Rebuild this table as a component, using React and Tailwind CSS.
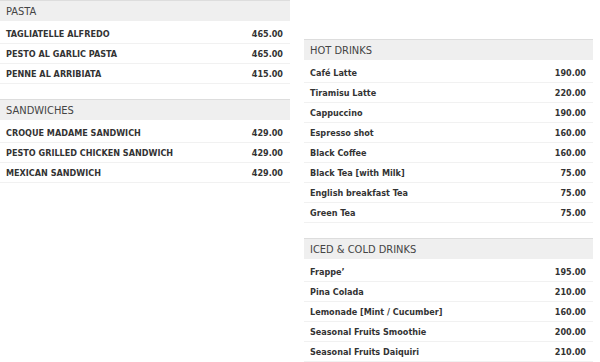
import React from 'react'

const font = { fontFamily: '"DejaVu Sans Condensed", "DejaVu Sans", "Liberation Sans", sans-serif' }

const leftMenu = [
  {
    title: 'PASTA',
    items: [
      ['TAGLIATELLE ALFREDO', '465.00'],
      ['PESTO AL GARLIC PASTA', '465.00'],
      ['PENNE AL ARRIBIATA', '415.00']
    ]
  },
  {
    title: 'SANDWICHES',
    items: [
      ['CROQUE MADAME SANDWICH', '429.00'],
      ['PESTO GRILLED CHICKEN SANDWICH', '429.00'],
      ['MEXICAN SANDWICH', '429.00']
    ]
  }
]

const rightMenu = [
  {
    title: 'HOT DRINKS',
    items: [
      ['Café Latte', '190.00'],
      ['Tiramisu Latte', '220.00'],
      ['Cappuccino', '190.00'],
      ['Espresso shot', '160.00'],
      ['Black Coffee', '160.00'],
      ['Black Tea [with Milk]', '75.00'],
      ['English breakfast Tea', '75.00'],
      ['Green Tea', '75.00']
    ]
  },
  {
    title: 'ICED & COLD DRINKS',
    items: [
      ['Frappe’', '195.00'],
      ['Pina Colada', '210.00'],
      ['Lemonade [Mint / Cucumber]', '160.00'],
      ['Seasonal Fruits Smoothie', '200.00'],
      ['Seasonal Fruits Daiquiri', '210.00']
    ]
  }
]

function Section({ title, items }) {
  return (
    <section className="mb-[15px]">
      <h3 className="h-[21px] border-t border-[#dddddd] bg-[#efefef] pl-[6px] pt-px text-[11px] leading-[20px] font-normal text-[#444444]">
        {title}
      </h3>
      <ul className="mt-[3px]">
        {items.map(([name, price]) => (
          <li
            key={name}
            className="flex h-[20px] items-center justify-between border-b border-[#f1f1f1] pl-[6px] pr-[7px] pt-[2px] text-[9px] font-bold text-[#333333]"
          >
            <span>{name}</span>
            <span>{price}</span>
          </li>
        ))}
      </ul>
    </section>
  )
}

export default function App() {
  return (
    <div className="flex h-[362px] w-[600px] overflow-hidden bg-white" style={font}>
      <div className="w-[290px]">
        {leftMenu.map(s => (
          <Section key={s.title} {...s} />
        ))}
      </div>
      <div className="ml-[14px] mt-[39px] w-[289px]">
        {rightMenu.map(s => (
          <Section key={s.title} {...s} />
        ))}
      </div>
    </div>
  )
}
